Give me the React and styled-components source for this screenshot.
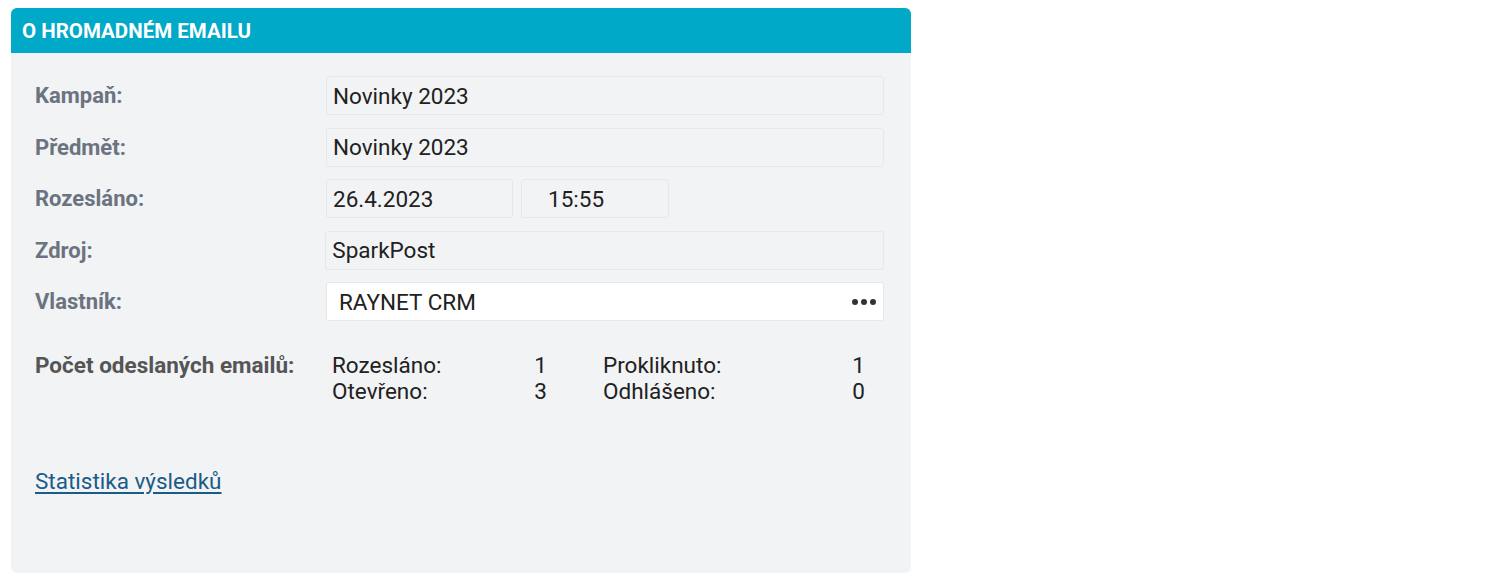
import React from "react";
import styled, { createGlobalStyle } from "styled-components";

const GlobalStyle = createGlobalStyle`
  body {
    margin: 0;
    background: #ffffff;
    font-family: Roboto, "Liberation Sans", sans-serif;
  }
`;

const stats = [
  [
    { label: "Rozesláno:", value: 1 },
    { label: "Otevřeno:", value: 3 },
  ],
  [
    { label: "Prokliknuto:", value: 1 },
    { label: "Odhlášeno:", value: 0 },
  ],
];

const App = () => {
  return (
    <>
      <GlobalStyle />
      <Page>
        <Card>
          <CardHeader>O HROMADNÉM EMAILU</CardHeader>
          <CardBody>
            <Row>
              <Label>Kampaň:</Label>
              <Field>Novinky 2023</Field>
            </Row>
            <Row>
              <Label>Předmět:</Label>
              <Field>Novinky 2023</Field>
            </Row>
            <Row>
              <Label>Rozesláno:</Label>
              <FieldGroup>
                <Field width="187px">26.4.2023</Field>
                <Field width="148px" indent="26px">15:55</Field>
              </FieldGroup>
            </Row>
            <Row>
              <Label>Zdroj:</Label>
              <Field stretch="2px">SparkPost</Field>
            </Row>
            <Row>
              <Label>Vlastník:</Label>
              <Field white indent="12px">
                RAYNET CRM
                <Dots>
                  <Dot />
                  <Dot />
                  <Dot />
                </Dots>
              </Field>
            </Row>
            <StatsRow>
              <StatsLabel>Počet odeslaných emailů:</StatsLabel>
              <StatsGrid>
                {stats.map((col, i) => (
                  <StatsColumn key={i} wide={i === 1}>
                    {col.map((s) => (
                      <StatLine key={s.label}>
                        <span>{s.label}</span>
                        <span>{s.value}</span>
                      </StatLine>
                    ))}
                  </StatsColumn>
                ))}
              </StatsGrid>
            </StatsRow>
            <Link href="#">Statistika výsledků</Link>
          </CardBody>
        </Card>
      </Page>
    </>
  );
};

const Page = styled.div`
  padding: 8px 0 0 11px;
`;

const Card = styled.div`
  width: 900px;
  height: 565px;
  border-radius: 6px;
  overflow: hidden;
  background-color: #f1f3f5;
  display: flex;
  flex-direction: column;
`;

const CardHeader = styled.div`
  height: 45px;
  background-color: #00a9c7;
  color: #ffffff;
  font-weight: 700;
  font-size: 20.5px;
  display: flex;
  align-items: center;
  padding-left: 11px;
`;

const CardBody = styled.div`
  padding: 23px 27px 0 24px;
  display: flex;
  flex-direction: column;
`;

const Row = styled.div`
  display: flex;
  align-items: center;
  height: 39px;
  margin-bottom: 12.5px;
`;

const Label = styled.div`
  width: 291px;
  color: #6b7280;
  font-weight: 700;
  font-size: 22px;
`;

const FieldGroup = styled.div`
  display: flex;
  gap: 8px;
`;

const Field = styled.div`
  box-sizing: border-box;
  height: 39px;
  width: ${(p) => p.width || `calc(558px + ${p.stretch || "0px"})`};
  display: flex;
  align-items: center;
  justify-content: space-between;
  padding: 0 6px 0 ${(p) => p.indent || "6px"};
  background-color: ${(p) => (p.white ? "#ffffff" : "#f2f3f5")};
  border: 1px solid #e5e7ea;
  border-radius: 3px;
  color: #212121;
  font-size: 22.5px;
`;

const Dots = styled.div`
  display: flex;
  gap: 3px;
  padding-right: 1px;
`;

const Dot = styled.span`
  width: 6px;
  height: 6px;
  border-radius: 50%;
  background-color: #333;
`;

const StatsRow = styled.div`
  display: flex;
  margin-top: 18px;
`;

const StatsLabel = styled.div`
  width: 297px;
  color: #555555;
  font-weight: 700;
  font-size: 22.5px;
  line-height: 26px;
`;

const StatsGrid = styled.div`
  display: flex;
  gap: 56px;
`;

const StatsColumn = styled.div`
  width: ${(p) => (p.wide ? "262px" : "215px")};
  display: flex;
  flex-direction: column;
`;

const StatLine = styled.div`
  display: flex;
  justify-content: space-between;
  font-size: 22.5px;
  line-height: 26px;
  color: #212121;
`;

const Link = styled.a`
  margin-top: 64px;
  align-self: flex-start;
  color: #1b5b88;
  font-size: 22.5px;
  text-decoration: underline;
  text-underline-offset: 3px;
`;

export default App;
